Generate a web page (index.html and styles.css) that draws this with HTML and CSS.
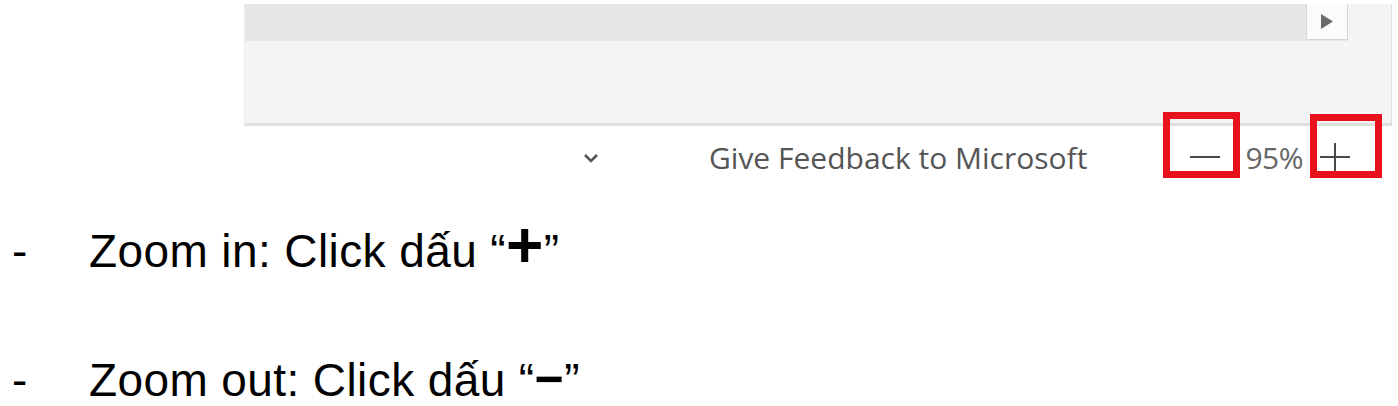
FILE: index.html
```html
<!DOCTYPE html>
<html lang="vi">
<head>
<meta charset="utf-8">
<title>Zoom</title>
<link rel="stylesheet" href="styles.css">
</head>
<body>
<div class="shot">
  <div class="panel">
    <div class="strip">
      <div class="scroll-btn">
        <svg width="14" height="17" viewBox="0 0 14 17"><path d="M1 1 L13 8.5 L1 16 Z" fill="#6a6a6a"/></svg>
      </div>
    </div>
    <div class="panel-body"></div>
  </div>
  <div class="statusbar">
    <svg class="chevron" width="16" height="10" viewBox="0 0 16 10"><path d="M2 2 L8 8 L14 2" fill="none" stroke="#555" stroke-width="2.6"/></svg>
    <span class="feedback">Give Feedback to Microsoft</span>
    <span class="zoom-btn minus mark">
      <svg width="30" height="4" viewBox="0 0 30 4"><rect x="0" y="1" width="30" height="2" fill="#4a4a4a"/></svg>
    </span>
    <span class="pct">95%</span>
    <span class="zoom-btn plus mark">
      <svg width="30" height="28" viewBox="0 0 30 28"><rect x="0" y="13" width="30" height="2" fill="#4a4a4a"/><rect x="14" y="0" width="2" height="28" fill="#4a4a4a"/></svg>
    </span>
  </div>
  <ul class="notes">
    <li class="note"><span class="dash">-</span><span class="txt">Zoom in: Click dấu “<b class="sym">+</b>”</span></li>
    <li class="note"><span class="dash">-</span><span class="txt">Zoom out: Click dấu “<b class="sym minus-sym">−</b>”</span></li>
  </ul>
</div>
</body>
</html>
```

FILE: styles.css
```css
* { box-sizing: border-box; }
html, body { margin: 0; padding: 0; background: #fff; }
.shot { width: 1398px; height: 406px; overflow: hidden; position: relative; }

.panel {
  margin: 4px 0 0 244px;
  width: 1148px;
  height: 122px;
  border-left: 1px solid #ececec;
  border-right: 1px solid #dedede;
  border-bottom: 3px solid #e0e0e0;
  background: #f4f4f4;
  display: flex;
  flex-direction: column;
}
.strip {
  height: 37px;
  background: #e6e6e6;
  margin-right: 43px;
  display: flex;
  justify-content: flex-end;
}
.scroll-btn {
  width: 42px;
  height: 36px;
  background: #fbfbfb;
  border-left: 1px solid #d6d6d6;
  border-right: 1px solid #d6d6d6;
  border-bottom: 1px solid #d6d6d6;
  display: flex;
  align-items: center;
  justify-content: center;
}
.panel-body { flex: 1; }

.statusbar {
  height: 62px;
  display: flex;
  align-items: center;
  padding-left: 583px;
  font-family: "Open Sans", "Noto Sans", sans-serif;
  color: #5a5a5a;
}
.chevron { margin-top: 2px; }
.feedback {
  margin-left: 110px;
  font-size: 30px;
  color: #555;
}
.zoom-btn {
  position: relative;
  display: flex;
  align-items: center;
  justify-content: center;
  width: 30px;
  height: 30px;
}
.zoom-btn.minus { margin-left: 103px; }
.zoom-btn.plus { margin-left: 17px; }
.mark::after {
  content: "";
  position: absolute;
  border: 7px solid #e8121c;
}
.minus.mark::after { left: -27px; right: -20px; top: -30px; bottom: -6px; }
.plus.mark::after { left: -10px; right: -32px; top: -28px; bottom: -6px; }
.pct {
  margin-left: 25px;
  font-size: 30px;
  color: #666;
  letter-spacing: -0.5px;
}

.notes {
  list-style: none;
  margin: 0;
  padding: 0;
  font-family: "Liberation Sans", Arial, sans-serif;
  color: #000;
}
.note {
  display: flex;
  align-items: baseline;
  font-size: 46px;
  line-height: 44px;
}
.note:first-child { margin-top: 35px; }
.note + .note { margin-top: 84px; }
.dash { width: 89px; padding-left: 12px; }
.txt { white-space: nowrap; letter-spacing: 0.4px; }
.sym { font-size: 64px; font-weight: 700; line-height: 44px; }
.minus-sym { font-size: 50px; }
```
